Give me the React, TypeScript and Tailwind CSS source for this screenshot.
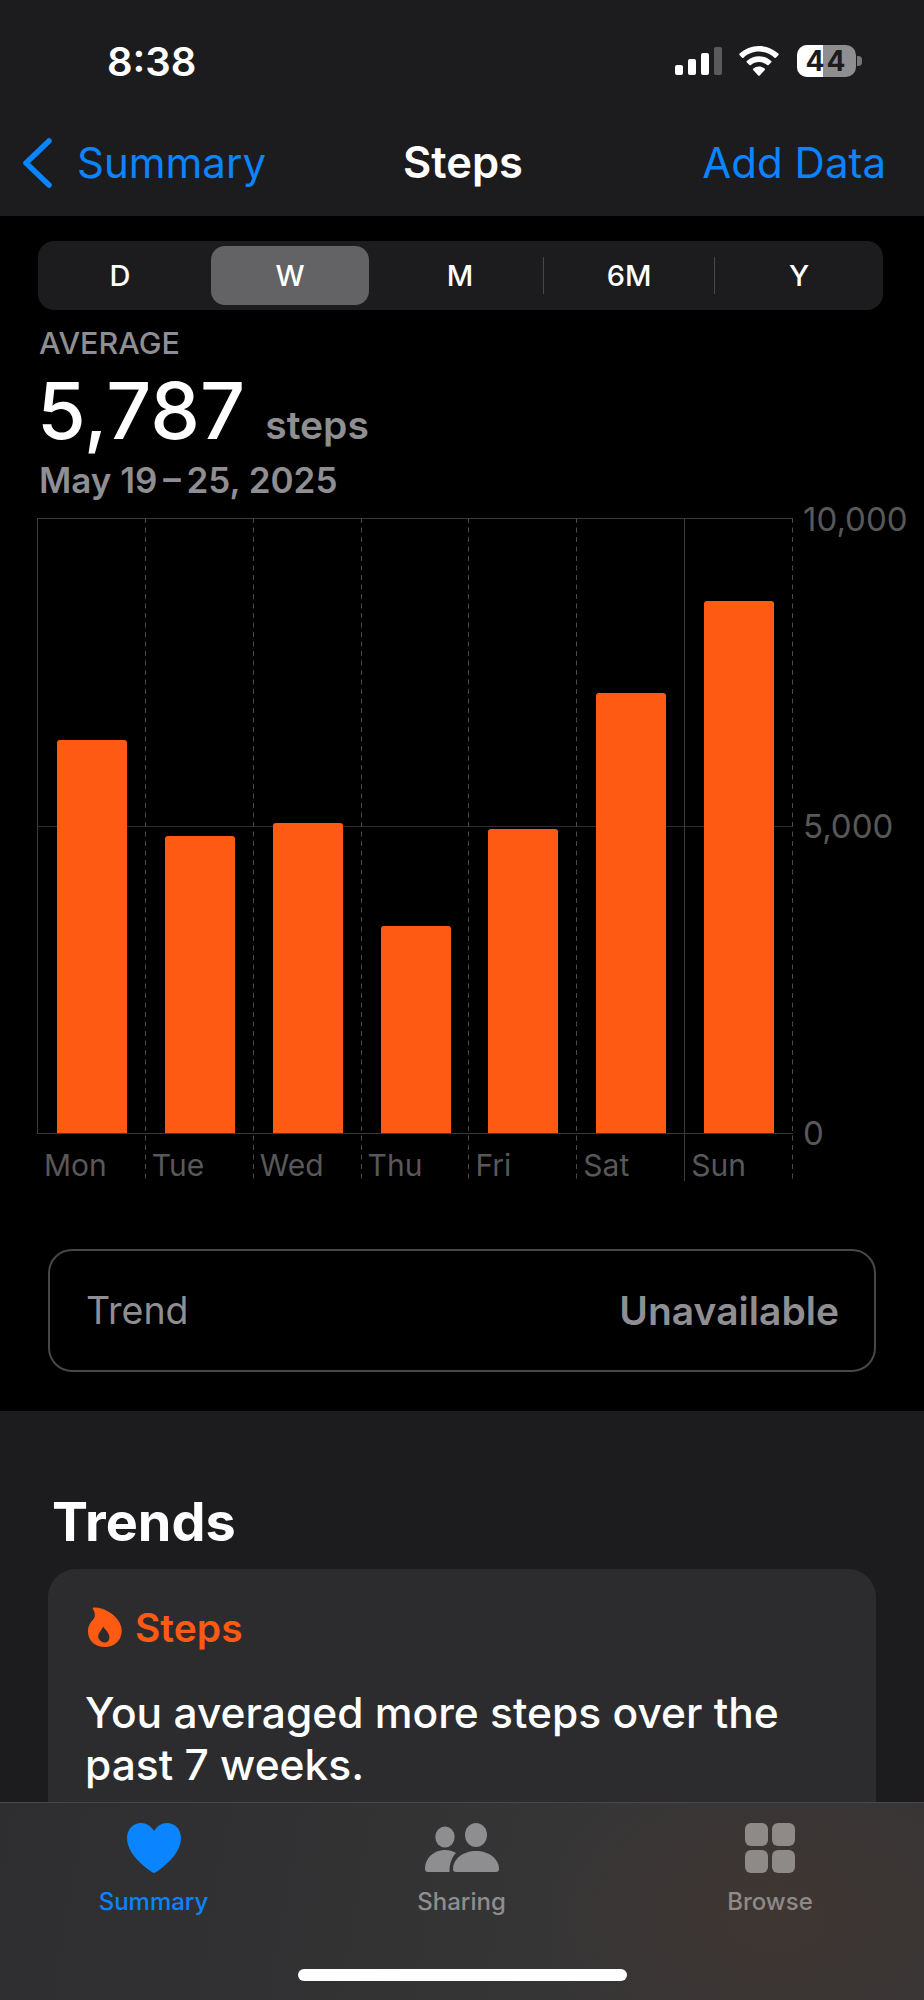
import React from "react";

const bars = [
  { d: "Mon", h: 393 },
  { d: "Tue", h: 297 },
  { d: "Wed", h: 310 },
  { d: "Thu", h: 207 },
  { d: "Fri", h: 304 },
  { d: "Sat", h: 440 },
  { d: "Sun", h: 532 },
];

function Dashed() {
  return (
    <svg className="absolute right-[-1px] top-0 h-full w-[1px]" preserveAspectRatio="none">
      <line x1="0.5" y1="0" x2="0.5" y2="100%" stroke="#4a4a4c" strokeWidth="1" strokeDasharray="5 4.5" />
    </svg>
  );
}

export default function App() {
  return (
    <div className="relative h-[2000px] w-[924px] overflow-hidden bg-black font-['Inter',sans-serif] text-white">
      {/* header */}
      <div className="h-[216px] bg-[#1c1c1e]">
        <div className="flex h-[122px] items-center justify-between pl-[107px] pr-[62px]">
          <div className="pt-[2px] text-[40px] leading-none font-semibold">8:38</div>
          <div className="flex items-center">
            <div className="flex items-end gap-[5px]">
              <div className="h-[10px] w-[8px] rounded-[2px] bg-white" />
              <div className="h-[16px] w-[8px] rounded-[2px] bg-white" />
              <div className="h-[22px] w-[8px] rounded-[2px] bg-white" />
              <div className="h-[28px] w-[8px] rounded-[2px] bg-[#5a5a5c]" />
            </div>
            <svg className="ml-[17px]" width="40" height="30" viewBox="0 0 40 30" fill="#fff">
              <path d="M20 0C12.5 0 5.7 2.9.6 7.6c-.4.4-.4 1-.1 1.4l2.6 2.7c.4.4 1 .4 1.4 0C8.6 8 14 5.6 20 5.6s11.400 2.400 15.500 6.100c.4.4 1 .4 1.400 0l2.600-2.700c.4-.4.400-1-.1-1.400C34.300 2.900 27.500 0 20 0z" />
              <path d="M20 10.200c-4.700 0-9 1.800-12.200 4.700-.4.400-.4 1-.1 1.400l2.700 2.700c.4.400 1 .4 1.400.1 2.200-1.900 5.100-3.100 8.200-3.100s6 1.200 8.200 3.100c.4.300 1 .3 1.400-.1l2.700-2.700c.4-.4.300-1-.1-1.400C29 12 24.700 10.200 20 10.200z" />
              <path d="M20 20.400c-2.200 0-4.200.8-5.700 2.100-.4.400-.5 1-.1 1.400l5 5.500c.4.400 1.200.4 1.600 0l5-5.500c.4-.4.300-1-.1-1.400-1.500-1.300-3.500-2.100-5.700-2.100z" />
            </svg>
            <div className="relative ml-[18px] flex h-[32px] w-[59px] overflow-hidden rounded-[10px] bg-[#8e8e90]">
              <div className="h-full w-[26px] bg-white" />
              <div className="absolute inset-0 flex items-center justify-center text-[28px] leading-none font-bold tracking-[2px] text-[#1c1c1e]">44</div>
            </div>
            <div className="ml-[1px] h-[10px] w-[5px] rounded-r-[4px] bg-[#77777a]" />
          </div>
        </div>
        <div className="relative flex h-[82px] items-center justify-between pl-[22px] pr-[38px]">
          <div className="flex items-center text-[#0a84ff]">
            <svg width="30" height="50" viewBox="0 0 30 50" fill="none" stroke="#0a84ff" strokeWidth="5.500" strokeLinecap="round" strokeLinejoin="round">
              <path d="M27 3 L4 25 L27 47" />
            </svg>
            <span className="ml-[25px] text-[42px] leading-none">Summary</span>
          </div>
          <div className="absolute left-[403px] text-[43.500px] leading-none font-semibold">Steps</div>
          <div className="text-[42px] leading-none text-[#0a84ff]">Add Data</div>
        </div>
      </div>

      {/* segmented */}
      <div className="ml-[38px] mr-[41px] mt-[25px] flex h-[69px] items-center rounded-[16px] bg-[#1c1c1e] px-[6px] text-[29px] font-medium">
        <div className="flex h-[59px] w-[167px] items-center justify-center pr-[15px]">D</div>
        <div className="flex h-[59px] w-[158px] items-center justify-center rounded-[14px] bg-[#636366]">W</div>
        <div className="flex h-[59px] w-[174px] items-center justify-center pl-[8px]">M</div>
        <div className="h-[37px] w-[1px] bg-[#48484a]" />
        <div className="flex h-[59px] w-[170px] items-center justify-center">6M</div>
        <div className="h-[37px] w-[1px] bg-[#48484a]" />
        <div className="flex h-[59px] flex-1 items-center justify-center pl-[6px]">Y</div>
      </div>

      {/* summary */}
      <div className="ml-[39px] mt-[17px] text-[30.500px] leading-[32px] font-medium text-[#8e8e93]">AVERAGE</div>
      <div className="ml-[37px] mt-[11px] flex items-baseline">
        <span className="text-[79px] leading-[80px] font-medium">5,787</span>
        <span className="ml-[20px] text-[39px] font-semibold text-[#8e8e93]">steps</span>
      </div>
      <div className="ml-[39px] mt-[5px] text-[35px] leading-[40px] font-semibold text-[#8e8e93]">May 19{"\u2009"}–{"\u2009"}25, 2025</div>

      {/* chart */}
      <div className="relative ml-[37px] mt-[18px] h-[663px] w-[887px]">
        <div className="relative box-content flex h-[614px] w-[755px] items-end border-t border-b border-l border-[#3a3a3c]">
          <div className="absolute left-0 right-0 top-[307px] h-[1px] bg-[#2c2c2e]" />
          {bars.map((b) => (
            <div key={b.d} className="relative flex h-full w-[107.860px] items-end justify-center">
              <div className="w-[70px] rounded-t-[3px] bg-[#ff5a14]" style={{ height: b.h }} />
            </div>
          ))}
        </div>
        <div className="absolute left-0 top-0 flex h-full w-[755px]">
          {bars.map((b, i) => (
            <div key={b.d} className="relative h-full w-[107.860px]">
              {i === 5 ? <div className="absolute right-[-1px] top-0 h-full w-[1px] bg-[#3a3a3c]" /> : <Dashed />}
            </div>
          ))}
        </div>
        <div className="mt-[13px] flex w-[755px] text-[30px] leading-[36px] text-[#58585a]">
          {bars.map((b) => (
            <div key={b.d} className="w-[107.860px] pl-[7px]">{b.d}</div>
          ))}
        </div>
        <div className="absolute left-[766px] top-[-17px] text-[33px] leading-[36px] text-[#58585a]">10,000</div>
        <div className="absolute left-[766px] top-[290px] text-[33px] leading-[36px] text-[#58585a]">5,000</div>
        <div className="absolute left-[766px] top-[597px] text-[33px] leading-[36px] text-[#58585a]">0</div>
      </div>

      {/* trend box */}
      <div className="mx-[48px] mt-[68px] flex h-[123px] items-center justify-between rounded-[24px] border-2 border-[#48484a] pl-[36px] pr-[35px] pt-[2px] text-[37.500px] text-[#8e8e93]">
        <span>Trend</span>
        <span className="text-[39px] font-semibold">Unavailable</span>
      </div>

      {/* trends */}
      <div className="mt-[39px] h-[600px] bg-[#1c1c1e] px-[48px] pt-[79px]">
        <div className="ml-[4px] text-[54px] leading-[64px] font-bold">Trends</div>
        <div className="mt-[15px] h-[400px] rounded-[28px] bg-[#2c2c2e] px-[37px] pt-[38px]">
          <div className="flex items-center">
            <svg className="ml-[3px]" width="35" height="41" viewBox="0 0 36 42" fill="#ff5a14">
              <path fillRule="evenodd" d="M6 .5C14 0 28 6 33 17c2 5 2 9 1 12-2 8-9 12-16.500 12C8 41 0 35 0 25c0-6 3-10 6-13 2-3 1-7-1-10C4.800 1 5.200 .5 6 .5zM15.500 20c1.500 3 6.500 6 6.500 11 0 3.500-2 5.500-4.500 5.500-2.500 0-7-2.500-7-6 0-3.500 3.500-6.500 5-10.500z" />
            </svg>
            <span className="ml-[12px] text-[39px] leading-none font-semibold text-[#ff5a14]">Steps</span>
          </div>
          <div className="mt-[39px] text-[42.500px] leading-[52px] font-medium">You averaged more steps over the<br />past 7 weeks.</div>
        </div>
      </div>

      {/* tab bar */}
      <div className="absolute bottom-0 left-0 h-[198px] w-full border-t border-[#48484a] bg-[radial-gradient(ellipse_260px_180px_at_84%_58%,#3f3633_0%,rgba(63,54,51,0)_100%),linear-gradient(100deg,#2e2e30_0%,#353536_60%,#363535_100%)]">
        <div className="flex pt-[20px]">
          <div className="flex w-[307px] flex-col items-center">
            <svg width="54" height="50" viewBox="0 0 54 50" fill="#0a84ff">
              <path d="M27 50c-1 0-2.500-1-4-2.200C11 39 0 28 0 15 0 6.500 6 0 14 0c5.500 0 10 3 13 8 3-5 7.500-8 13-8 8 0 14 6.500 14 15 0 13-11 24-23 32.800C29.500 49 28 50 27 50z" />
            </svg>
            <span className="mt-[15px] text-[24px] leading-[28px] font-medium text-[#0a84ff]">Summary</span>
          </div>
          <div className="flex w-[309px] flex-col items-center">
            <svg width="74" height="50" viewBox="0 0 74 50" fill="#8e8e90">
              <ellipse cx="20" cy="14" rx="9.700" ry="10.500" />
              <ellipse cx="51" cy="12" rx="11" ry="12" />
              <path d="M3 49C1 49 0 48 0 46 0 36 8 27 20 27c4 0 8 1 11 3-4 4-6.500 10-6.500 19z" />
              <path d="M31 49c-2 0-3-1-3-3 0-10 10-18 23-18s23 8 23 18c0 2-1 3-3 3z" />
            </svg>
            <span className="mt-[15px] text-[24px] leading-[28px] font-medium text-[#8e8e90]">Sharing</span>
          </div>
          <div className="flex w-[308px] flex-col items-center">
            <div className="grid h-[50px] w-[50px] grid-cols-2 gap-[4px]">
              <div className="rounded-[6px] bg-[#8e8a88]" />
              <div className="rounded-[6px] bg-[#8e8a88]" />
              <div className="rounded-[6px] bg-[#8e8a88]" />
              <div className="rounded-[6px] bg-[#8e8a88]" />
            </div>
            <span className="mt-[15px] text-[24px] leading-[28px] font-medium text-[#8e8a88]">Browse</span>
          </div>
        </div>
        <div className="absolute bottom-[19px] left-[298px] h-[12px] w-[329px] rounded-full bg-white" />
      </div>
    </div>
  );
}
